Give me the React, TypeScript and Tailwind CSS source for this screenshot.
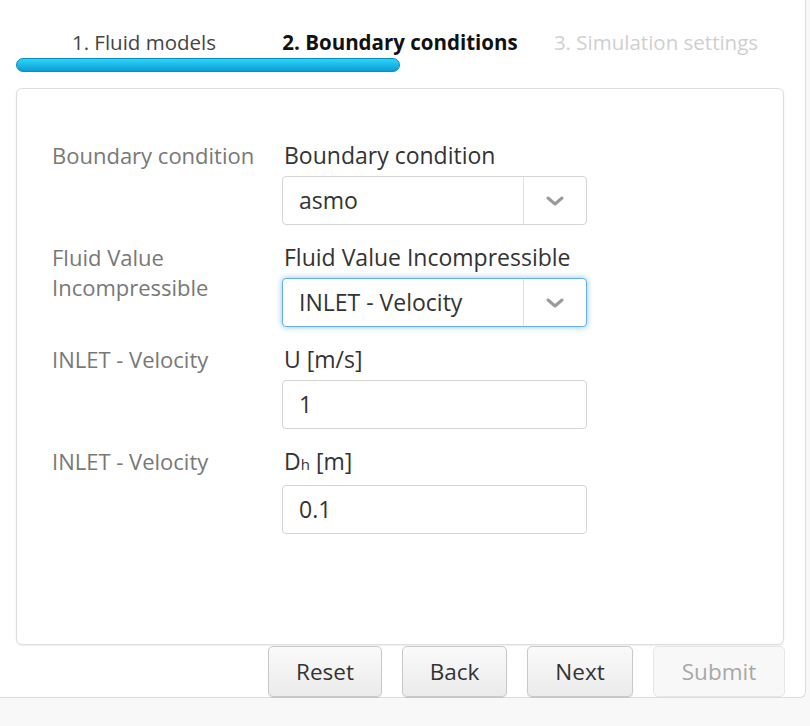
import React from "react";

function Chevron() {
  return (
    <svg width="18" height="10" viewBox="0 0 18 10" fill="none">
      <path d="M2 2 L9 8 L16 2" stroke="#9a9a9a" strokeWidth="3" strokeLinecap="round" strokeLinejoin="round" />
    </svg>
  );
}

function SelectBox({ value, focused }: { value: string; focused?: boolean }) {
  return (
    <div
      className={
        focused
          ? "flex h-[49px] w-[305px] items-stretch rounded-[4px] border border-[#66afe9] bg-white shadow-[0_0_6px_rgba(102,175,233,0.75)]"
          : "flex h-[49px] w-[305px] items-stretch rounded-[4px] border border-[#d5d5d5] bg-white"
      }
    >
      <div className="flex flex-1 items-center pl-[16px] text-[23px] text-[#333]">{value}</div>
      <div className="flex w-[63px] items-center justify-center border-l border-[#e2e2e2]">
        <Chevron />
      </div>
    </div>
  );
}

function TextBox({ value }: { value: string }) {
  return (
    <div className="flex h-[49px] w-[305px] items-center rounded-[4px] border border-[#d5d5d5] bg-white pl-[16px] text-[23px] text-[#333]">
      {value}
    </div>
  );
}

function Row({
  left,
  label,
  children,
}: {
  left: React.ReactNode;
  label: React.ReactNode;
  children: React.ReactNode;
}) {
  return (
    <div className="grid grid-cols-[230px_305px]">
      <div className="text-[22px] leading-[30px] text-[#787878]">{left}</div>
      <div className="flex flex-col">
        <div className="pl-[2px] text-[23px] leading-[30px] text-[#333]">{label}</div>
        <div className="mt-[6px]">{children}</div>
      </div>
    </div>
  );
}

export default function App() {
  return (
    <div className="min-h-screen bg-[#f8f8f8] font-['Open_Sans',sans-serif]">
      <div className="h-[698px] w-[806px] rounded-br-[6px] border-r border-b border-[#dcdcdc] bg-white px-[16px] pt-[28px]">
        <div className="grid w-[768px] grid-cols-3 text-[20.5px] leading-[28px]">
          <div className="text-center text-[#444]">1. Fluid models</div>
          <div className="text-center font-bold text-[#111]">2. Boundary conditions</div>
          <div className="text-center text-[#cfcfcf]">3. Simulation settings</div>
        </div>
        <div className="mt-[2px] h-[14px] w-[384px] rounded-full border border-[#0a8cc0] bg-gradient-to-b from-[#2ad6f8] to-[#0a9ed6]" />
        <div className="mt-[16px] h-[557px] w-[768px] rounded-[6px] border border-[#dedede] bg-white pl-[35px] pt-[51px] shadow-[0_1px_2px_rgba(0,0,0,0.08)]">
          <div className="flex flex-col gap-[17px]">
            <Row left="Boundary condition" label="Boundary condition">
              <SelectBox value="asmo" />
            </Row>
            <Row
              left={
                <>
                  Fluid Value
                  <br />
                  Incompressible
                </>
              }
              label="Fluid Value Incompressible"
            >
              <SelectBox value="INLET - Velocity" focused />
            </Row>
            <Row left="INLET - Velocity" label="U [m/s]">
              <TextBox value="1" />
            </Row>
            <Row
              left="INLET - Velocity"
              label={
                <>
                  D<span className="text-[15px]">h</span> [m]
                </>
              }
            >
              <TextBox value="0.1" />
            </Row>
          </div>
        </div>
        <div className="mt-[1px] flex w-[769px] justify-end gap-[20px]">
          <button className="h-[51px] w-[114px] rounded-[5px] border border-[#c8c8c8] bg-gradient-to-b from-[#fafafa] to-[#ebebeb] text-[22.5px] text-[#333] shadow-[0_1px_1px_rgba(0,0,0,0.1)]">
            Reset
          </button>
          <button className="h-[51px] w-[105px] rounded-[5px] border border-[#c8c8c8] bg-gradient-to-b from-[#fafafa] to-[#ebebeb] text-[22.5px] text-[#333] shadow-[0_1px_1px_rgba(0,0,0,0.1)]">
            Back
          </button>
          <button className="h-[51px] w-[106px] rounded-[5px] border border-[#c8c8c8] bg-gradient-to-b from-[#fafafa] to-[#ebebeb] text-[22.5px] text-[#333] shadow-[0_1px_1px_rgba(0,0,0,0.1)]">
            Next
          </button>
          <button className="h-[51px] w-[132px] rounded-[5px] border border-[#e6e6e6] bg-[#f8f8f8] text-[22.5px] text-[#a8a8a8]">
            Submit
          </button>
        </div>
      </div>
    </div>
  );
}
